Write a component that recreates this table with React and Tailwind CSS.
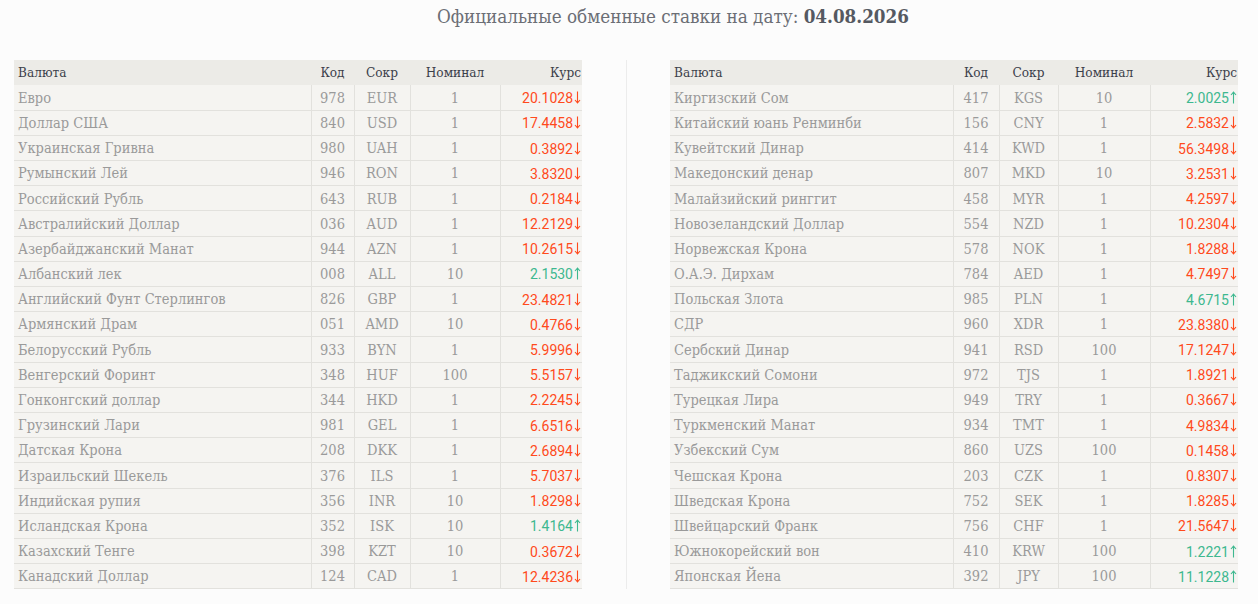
import React from "react";

const left = [
  ["Евро", "978", "EUR", "1", "20.1028", "down"],
  ["Доллар США", "840", "USD", "1", "17.4458", "down"],
  ["Украинская Гривна", "980", "UAH", "1", "0.3892", "down"],
  ["Румынский Лей", "946", "RON", "1", "3.8320", "down"],
  ["Российский Рубль", "643", "RUB", "1", "0.2184", "down"],
  ["Австралийский Доллар", "036", "AUD", "1", "12.2129", "down"],
  ["Азербайджанский Манат", "944", "AZN", "1", "10.2615", "down"],
  ["Албанский лек", "008", "ALL", "10", "2.1530", "up"],
  ["Английский Фунт Стерлингов", "826", "GBP", "1", "23.4821", "down"],
  ["Армянский Драм", "051", "AMD", "10", "0.4766", "down"],
  ["Белорусский Рубль", "933", "BYN", "1", "5.9996", "down"],
  ["Венгерский Форинт", "348", "HUF", "100", "5.5157", "down"],
  ["Гонконгский доллар", "344", "HKD", "1", "2.2245", "down"],
  ["Грузинский Лари", "981", "GEL", "1", "6.6516", "down"],
  ["Датская Крона", "208", "DKK", "1", "2.6894", "down"],
  ["Израильский Шекель", "376", "ILS", "1", "5.7037", "down"],
  ["Индийская рупия", "356", "INR", "10", "1.8298", "down"],
  ["Исландская Крона", "352", "ISK", "10", "1.4164", "up"],
  ["Казахский Тенге", "398", "KZT", "10", "0.3672", "down"],
  ["Канадский Доллар", "124", "CAD", "1", "12.4236", "down"],
];

const right = [
  ["Киргизский Сом", "417", "KGS", "10", "2.0025", "up"],
  ["Китайский юань Ренминби", "156", "CNY", "1", "2.5832", "down"],
  ["Кувейтский Динар", "414", "KWD", "1", "56.3498", "down"],
  ["Македонский денар", "807", "MKD", "10", "3.2531", "down"],
  ["Малайзийский ринггит", "458", "MYR", "1", "4.2597", "down"],
  ["Новозеландский Доллар", "554", "NZD", "1", "10.2304", "down"],
  ["Норвежская Крона", "578", "NOK", "1", "1.8288", "down"],
  ["О.А.Э. Дирхам", "784", "AED", "1", "4.7497", "down"],
  ["Польская Злота", "985", "PLN", "1", "4.6715", "up"],
  ["СДР", "960", "XDR", "1", "23.8380", "down"],
  ["Сербский Динар", "941", "RSD", "100", "17.1247", "down"],
  ["Таджикский Сомони", "972", "TJS", "1", "1.8921", "down"],
  ["Турецкая Лира", "949", "TRY", "1", "0.3667", "down"],
  ["Туркменский Манат", "934", "TMT", "1", "4.9834", "down"],
  ["Узбекский Сум", "860", "UZS", "100", "0.1458", "down"],
  ["Чешская Крона", "203", "CZK", "1", "0.8307", "down"],
  ["Шведская Крона", "752", "SEK", "1", "1.8285", "down"],
  ["Швейцарский Франк", "756", "CHF", "1", "21.5647", "down"],
  ["Южнокорейский вон", "410", "KRW", "100", "1.2221", "up"],
  ["Японская Йена", "392", "JPY", "100", "11.1228", "up"],
];

const slab = { fontFamily: '"DejaVu Serif Condensed", "DejaVu Serif", serif' };

// thin arrow like the ↓ / ↑ glyph on the site
const Arrow = ({ up }) => (
  <svg width="7" height="13" viewBox="0 0 7 13" className="inline-block ml-[1px] align-[-1px]">
    {up ? (
      <path d="M3.5 12.5V1.5M1 4l2.5-2.8L6 4" fill="none" stroke="currentColor" strokeWidth="1.1" />
    ) : (
      <path d="M3.5 0.5v11M1 9l2.5 2.8L6 9" fill="none" stroke="currentColor" strokeWidth="1.1" />
    )}
  </svg>
);

const RatesTable = ({ rows, widths }) => {
  return (
    <table className="table-fixed border-collapse w-[568px] text-[14.5px]" style={slab}>
      <colgroup>
        {widths.map((w, i) => (
          <col key={i} className={w} />
        ))}
      </colgroup>
      <thead>
        <tr className="bg-[#ecebe7] text-[#3b404a] h-[25px] text-[13.5px]">
          <th className="text-left font-normal pl-1">Валюта</th>
          <th className="text-center font-normal">Код</th>
          <th className="text-center font-normal">Сокр</th>
          <th className="text-center font-normal">Номинал</th>
          <th className="text-right font-normal pr-[1px]">Курс</th>
        </tr>
      </thead>
      <tbody>
        {rows.map((r, i) => (
          <tr key={i} className="bg-[#f5f4f1] text-[#9a9a9a] h-[25.2px] border-b border-[#e2e1dd]">
            <td className="pl-1 pt-[2px] whitespace-nowrap">{r[0]}</td>
            <td className="text-center pt-[2px] border-l border-[#e2e1dd]">{r[1]}</td>
            <td className="text-center pt-[2px] border-l border-[#e2e1dd]">{r[2]}</td>
            <td className="text-center pt-[2px] border-l border-[#e2e1dd]">{r[3]}</td>
            <td
              className={
                "text-right pr-[1px] pt-[2px] border-l border-[#e2e1dd] font-['Roboto',sans-serif] text-[14px] whitespace-nowrap " +
                (r[5] === "up" ? "text-[#3db88f]" : "text-[#ff4a1c]")
              }
            >
              {r[4]}
              <Arrow up={r[5] === "up"} />
            </td>
          </tr>
        ))}
      </tbody>
    </table>
  );
};

export default function App() {
  return (
    <div className="min-h-screen bg-[#fcfcfc] pt-[2px]">
      <h1 className="text-center text-[18.7px] text-[#6b6e75] pl-[88px]" style={slab}>
        Официальные обменные ставки на дату: <span className="font-bold text-[#555961]">04.08.2026</span>
      </h1>
      <div className="flex items-stretch pl-[14px] mt-[29px]">
        <RatesTable rows={left} widths={["w-[297px]", "w-[43px]", "w-[56px]", "w-[90px]", "w-[82px]"]} />
        <div className="w-[44px]" />
        <div className="w-px bg-[#ececec]" />
        <div className="w-[43px]" />
        <RatesTable rows={right} widths={["w-[283px]", "w-[46px]", "w-[59px]", "w-[92px]", "w-[88px]"]} />
      </div>
    </div>
  );
}
